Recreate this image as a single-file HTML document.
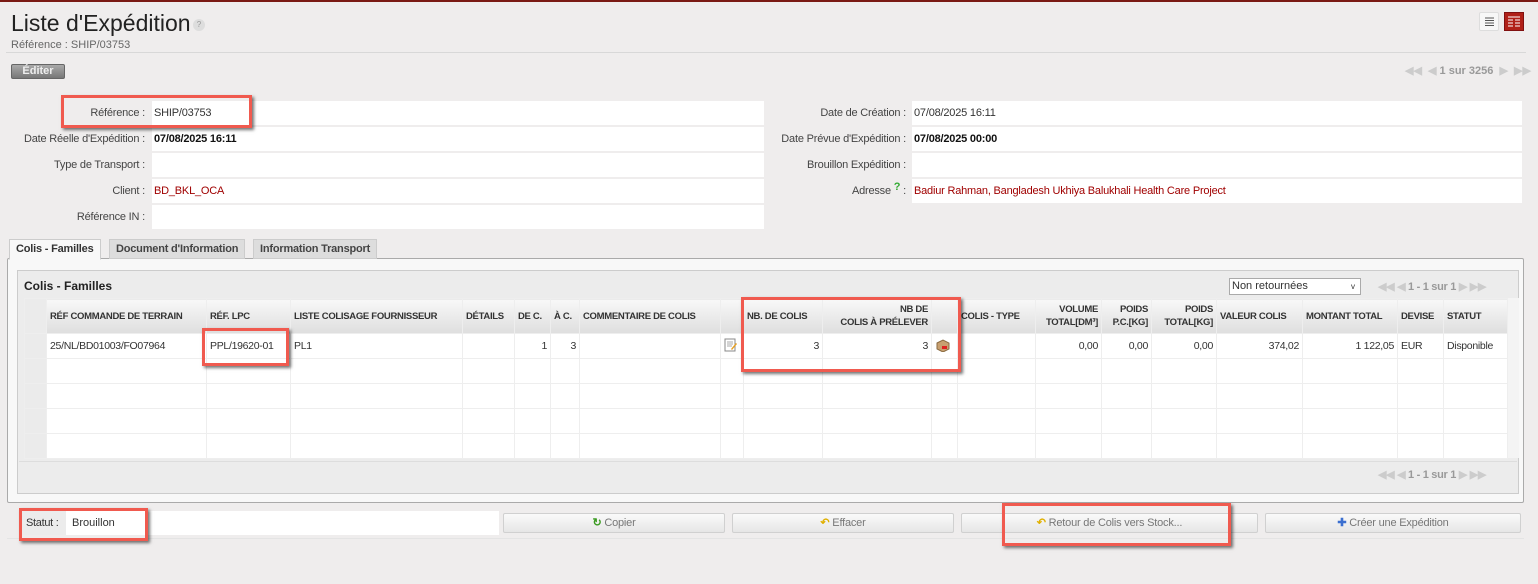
<!DOCTYPE html>
<html><head><meta charset="utf-8"><style>
*{box-sizing:border-box;margin:0;padding:0}
body{width:1538px;height:584px;background:#efeded;font-family:"Liberation Sans",Arial,sans-serif;font-size:11px;color:#333;position:relative;overflow:hidden}
.a{position:absolute}
.lbl{position:absolute;text-align:right;color:#444;font-size:11px;line-height:24px;letter-spacing:-0.2px}
.fld{position:absolute;background:#fff;height:24px;line-height:24px;padding-left:2px;font-size:11px;letter-spacing:-0.2px}
.red{color:#a00000}
.box{position:absolute;border:3px solid #f05a4f;box-shadow:2px 2px 3px rgba(0,0,0,.55)}
table{border-collapse:collapse;table-layout:fixed}
td,th{border:1px solid #eee;font-size:10.5px;padding:0 3px;white-space:nowrap;overflow:hidden;letter-spacing:-0.3px}
th{background:linear-gradient(#f8f8f8,#dedede);height:35px;text-align:left;color:#333;font-weight:bold;line-height:13px;font-size:9.5px}
td{height:25px;background:#fff}
td.n{background:#ebebeb}
.r{text-align:right}
.btn{position:absolute;top:513px;height:20px;border:1px solid #d0d0d0;border-radius:2px;background:linear-gradient(#fafafa,#e6e6e6);color:#777;text-align:center;line-height:18px;font-size:11px;letter-spacing:-0.2px}
.tab{position:absolute;top:239px;height:20px;line-height:19px;padding:0 6px;font-weight:bold;font-size:11px;border:1px solid #ccc;background:#ddd;color:#444;letter-spacing:-0.2px}
</style></head><body>
<div class="a" style="left:0;top:0;width:1538px;height:2px;background:#7a1a14"></div>
<div class="a" style="left:11px;top:10px;font-size:23px;color:#222">Liste d'Expédition</div>
<div class="a" style="left:193px;top:19px;width:12px;height:12px;border-radius:6px;background:#ddd;color:#999;font-size:8px;text-align:center;line-height:12px">?</div>
<div class="a" style="left:11px;top:39px;color:#666">Référence : SHIP/03753</div>
<div class="a" style="left:6px;top:52px;width:1520px;height:1px;background:#d8d8d8"></div>
<div class="a" style="left:1479px;top:12px;width:20px;height:19px;border:1px solid #ddd;background:#f7f7f7;border-radius:2px"><svg width="18" height="17"><g stroke="#555"><path d="M5 5h9M5 7.5h9M5 10h9M5 12.5h9"/></g></svg></div>
<div class="a" style="left:1504px;top:12px;width:20px;height:19px;background:#b02018;border:1px solid #801010"><svg width="18" height="17"><g stroke="#fff"><path d="M3 4h12M3 7h5M10 7h5M3 10h5M10 10h5M3 13h5M10 13h5"/></g></svg></div>
<div class="a" style="left:11px;top:64px;width:54px;height:15px;border:1px solid #666;border-radius:2px;background:linear-gradient(#aaa,#777);color:#eee;font-weight:bold;text-align:center;line-height:13px;font-size:11px">Éditer</div>
<div class="a" style="left:1405px;top:64px;color:#ccc;font-weight:bold;font-size:11px">◀◀ &nbsp;◀ <span style="color:#999">1 sur 3256</span> &nbsp;▶ &nbsp;▶▶</div>

<div class="lbl" style="left:0;width:145px;top:101px">Référence :</div><div class="fld" style="left:152px;top:101px;width:612px">SHIP/03753</div>
<div class="lbl" style="left:0;width:145px;top:127px">Date Réelle d'Expédition :</div><div class="fld" style="left:152px;top:127px;width:612px;font-weight:bold;color:#111">07/08/2025 16:11</div>
<div class="lbl" style="left:0;width:145px;top:153px">Type de Transport :</div><div class="fld" style="left:152px;top:153px;width:612px"></div>
<div class="lbl" style="left:0;width:145px;top:179px">Client :</div><div class="fld red" style="left:152px;top:179px;width:612px">BD_BKL_OCA</div>
<div class="lbl" style="left:0;width:145px;top:205px">Référence IN :</div><div class="fld" style="left:152px;top:205px;width:612px"></div>

<div class="lbl" style="left:700px;width:206px;top:101px">Date de Création :</div><div class="fld" style="left:912px;top:101px;width:610px">07/08/2025 16:11</div>
<div class="lbl" style="left:700px;width:206px;top:127px">Date Prévue d'Expédition :</div><div class="fld" style="left:912px;top:127px;width:610px;font-weight:bold;color:#111">07/08/2025 00:00</div>
<div class="lbl" style="left:700px;width:206px;top:153px">Brouillon Expédition :</div><div class="fld" style="left:912px;top:153px;width:610px"></div>
<div class="lbl" style="left:700px;width:206px;top:179px">Adresse <span style="color:#3a3;font-weight:bold;position:relative;top:-4px">?</span> :</div><div class="fld red" style="left:912px;top:179px;width:610px">Badiur Rahman, Bangladesh Ukhiya Balukhali Health Care Project</div>

<div class="a" style="left:7px;top:258px;width:1517px;height:245px;border:1px solid #aaa;background:#f8f8f8;border-radius:2px"></div>
<div class="tab" style="left:9px;background:#f8f8f8;border-bottom-color:#f8f8f8;color:#333;height:21px">Colis - Familles</div>
<div class="tab" style="left:109px">Document d'Information</div>
<div class="tab" style="left:253px">Information Transport</div>

<div class="a" style="left:17px;top:270px;width:1502px;height:224px;border:1px solid #ccc;background:#ececec"></div>
<div class="a" style="left:24px;top:279px;font-size:12px;font-weight:bold;color:#222">Colis - Familles</div>
<div class="a" style="left:1229px;top:278px;width:132px;height:17px;border:1px solid #aaa;background:#fff;font-size:11px;line-height:15px;padding-left:2px">Non retournées<span style="position:absolute;right:5px;font-size:8px">v</span></div>
<div class="a" style="left:1378px;top:280px;color:#ccc;font-weight:bold;font-size:11px;letter-spacing:-0.3px">◀◀ ◀ <span style="color:#999">1 - 1 sur 1</span> ▶ ▶▶</div>
<div class="a" style="left:1378px;top:468px;color:#ccc;font-weight:bold;font-size:11px;letter-spacing:-0.3px">◀◀ ◀ <span style="color:#999">1 - 1 sur 1</span> ▶ ▶▶</div>
<div class="a" style="left:1507px;top:298px;width:12px;height:160px;background:#f4f4f4"></div>

<table class="a" style="left:24px;top:298px;width:1483px">
<colgroup><col style="width:22px"><col style="width:160px"><col style="width:84px"><col style="width:172px"><col style="width:52px"><col style="width:36px"><col style="width:29px"><col style="width:141px"><col style="width:23px"><col style="width:79px"><col style="width:109px"><col style="width:26px"><col style="width:78px"><col style="width:66px"><col style="width:50px"><col style="width:65px"><col style="width:86px"><col style="width:95px"><col style="width:46px"><col style="width:64px"></colgroup>
<tr><th style="background:#ebebeb"></th><th>RÉF COMMANDE DE TERRAIN</th><th>RÉF. LPC</th><th>LISTE COLISAGE FOURNISSEUR</th><th>DÉTAILS</th><th>DE C.</th><th>À C.</th><th>COMMENTAIRE DE COLIS</th><th></th><th>NB. DE COLIS</th><th class="r">NB DE<br>COLIS À PRÉLEVER</th><th></th><th>COLIS - TYPE</th><th class="r">VOLUME<br>TOTAL[DM³]</th><th class="r">POIDS<br>P.C.[KG]</th><th class="r">POIDS<br>TOTAL[KG]</th><th>VALEUR COLIS</th><th>MONTANT TOTAL</th><th>DEVISE</th><th>STATUT</th></tr>
<tr><td class="n"></td><td>25/NL/BD01003/FO07964</td><td>PPL/19620-01</td><td>PL1</td><td></td><td class="r">1</td><td class="r">3</td><td></td><td><svg width="14" height="14"><rect x="1" y="1" width="10" height="12" fill="#fff" stroke="#888"/><path d="M3 4h6M3 6h6M3 8h5" stroke="#aaa"/><path d="M7 11l5-6 1 1-5 6z" fill="#e8a020"/></svg></td><td class="r">3</td><td class="r">3</td><td><svg width="16" height="14"><path d="M2 5l6-3 6 3v6l-6 3-6-3z" fill="#c8a070" stroke="#8a6a40"/><rect x="7" y="8" width="5" height="3" fill="#d22"/></svg></td><td></td><td class="r">0,00</td><td class="r">0,00</td><td class="r">0,00</td><td class="r">374,02</td><td class="r">1 122,05</td><td>EUR</td><td>Disponible</td></tr>
<tr><td class="n"></td><td></td><td></td><td></td><td></td><td></td><td></td><td></td><td></td><td></td><td></td><td></td><td></td><td></td><td></td><td></td><td></td><td></td><td></td><td></td></tr>
<tr><td class="n"></td><td></td><td></td><td></td><td></td><td></td><td></td><td></td><td></td><td></td><td></td><td></td><td></td><td></td><td></td><td></td><td></td><td></td><td></td><td></td></tr>
<tr><td class="n"></td><td></td><td></td><td></td><td></td><td></td><td></td><td></td><td></td><td></td><td></td><td></td><td></td><td></td><td></td><td></td><td></td><td></td><td></td><td></td></tr>
<tr><td class="n"></td><td></td><td></td><td></td><td></td><td></td><td></td><td></td><td></td><td></td><td></td><td></td><td></td><td></td><td></td><td></td><td></td><td></td><td></td><td></td></tr>
</table>
<div class="a" style="left:19px;top:461px;width:1498px;height:1px;background:#ddd"></div>

<div class="a" style="left:22px;top:511px;width:477px;height:24px;background:#fff"></div>
<div class="a" style="left:22px;top:511px;width:44px;height:24px;background:#ececec;line-height:24px;padding-left:4px;font-size:11px;letter-spacing:-0.3px">Statut :</div>
<div class="a" style="left:72px;top:511px;line-height:24px;font-size:11px">Brouillon</div>
<div class="btn" style="left:503px;width:222px"><span style="color:#3a9a20;font-weight:bold">↻</span> Copier</div>
<div class="btn" style="left:732px;width:222px"><span style="color:#e0b000;font-weight:bold">↶</span> Effacer</div>
<div class="btn" style="left:961px;width:297px"><span style="color:#e0b000;font-weight:bold">↶</span> Retour de Colis vers Stock...</div>
<div class="btn" style="left:1265px;width:256px"><span style="color:#3b6fd0;font-weight:bold">✚</span> Créer une Expédition</div>
<div class="a" style="left:7px;top:538px;width:1517px;height:1px;background:#e4e4e4"></div>

<div class="box" style="left:61px;top:95px;width:191px;height:33px"></div>
<div class="box" style="left:202px;top:328px;width:87px;height:38px"></div>
<div class="box" style="left:741px;top:297px;width:220px;height:75px"></div>
<div class="box" style="left:19px;top:508px;width:129px;height:33px"></div>
<div class="box" style="left:1002px;top:503px;width:229px;height:43px"></div>
</body></html>
